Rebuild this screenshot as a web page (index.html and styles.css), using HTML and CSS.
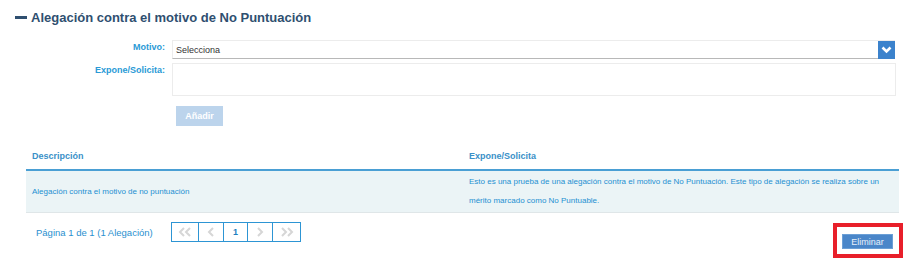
FILE: index.html
```html
<!DOCTYPE html>
<html lang="es">

<head>
    <meta charset="utf-8">
    <title>Alegaciones</title>
    <link rel="stylesheet" href="styles.css">
</head>

<body>
    <div class="panel">
        <h2 class="title"><span class="minus"></span>Alegación contra el motivo de No Puntuación</h2>

        <!-- Formulario de alta -->
        <div class="form">
            <div class="form-row">
                <label class="form-label">Motivo:</label>
                <div class="select">
                    <span class="select-text">Selecciona</span>
                    <span class="select-arrow">
                        <svg width="11" height="8" viewBox="0 0 11 8">
                            <path d="M1.5 1.5 L5.5 5.5 L9.5 1.5" fill="none" stroke="#fff" stroke-width="2.6"/>
                        </svg>
                    </span>
                </div>
            </div>
            <div class="form-row">
                <label class="form-label">Expone/Solicita:</label>
                <div class="textarea"></div>
            </div>
            <div class="form-row form-actions">
                <span class="form-label"></span>
                <button class="btn btn-disabled">Añadir</button>
            </div>
        </div>

        <!-- Listado -->
        <table class="list">
            <tr>
                <th class="col-desc">Descripción</th>
                <th>Expone/Solicita</th>
            </tr>
            <tr>
                <td>Alegación contra el motivo de no puntuación</td>
                <td>Esto es una prueba de una alegación contra el motivo de No Puntuación. Este tipo de alegación se realiza sobre un mérito marcado como No Puntuable.</td>
            </tr>
        </table>

        <div class="footer">
            <span class="page-info">Página 1 de 1 (1 Alegación)</span>
            <div class="pager">
                <span class="pager-cell">
                    <svg width="14" height="10" viewBox="0 0 14 10"><path d="M6 1 L2 5 L6 9 M12 1 L8 5 L12 9" fill="none" stroke="#d6d6d6" stroke-width="2"/></svg>
                </span>
                <span class="pager-cell">
                    <svg width="8" height="10" viewBox="0 0 8 10"><path d="M6 1 L2 5 L6 9" fill="none" stroke="#d6d6d6" stroke-width="2"/></svg>
                </span>
                <span class="pager-cell current">1</span>
                <span class="pager-cell">
                    <svg width="8" height="10" viewBox="0 0 8 10"><path d="M2 1 L6 5 L2 9" fill="none" stroke="#d6d6d6" stroke-width="2"/></svg>
                </span>
                <span class="pager-cell">
                    <svg width="14" height="10" viewBox="0 0 14 10"><path d="M2 1 L6 5 L2 9 M8 1 L12 5 L8 9" fill="none" stroke="#d6d6d6" stroke-width="2"/></svg>
                </span>
            </div>
            <div class="delete-wrap">
                <button class="btn btn-primary">Eliminar</button>
                <span class="highlight"></span>
            </div>
        </div>
    </div>
</body>

</html>
```

FILE: styles.css
```css
/* Base */
body {
    margin: 0;
    font-family: 'Liberation Sans', Arial, sans-serif;
    background-color: #ffffff;
}

.panel {
    padding: 8px 17px 20px 15px;
}

/* Title */
.title {
    display: flex;
    align-items: center;
    margin: 0;
    height: 18px;
    font-size: 13px;
    font-weight: 700;
    color: #2f4f70;
}

.minus {
    display: inline-block;
    width: 12px;
    height: 3px;
    background-color: #2f4f70;
    margin-right: 4px;
}

/* Form */
.form {
    margin-top: 14px;
}

.form-row {
    display: flex;
    align-items: flex-start;
    margin-bottom: 4px;
}

.form-label {
    width: 150px;
    flex-shrink: 0;
    margin-right: 7px;
    text-align: right;
    font-size: 9px;
    font-weight: 700;
    color: #2a9ad6;
    padding-top: 2px;
}

.select {
    display: flex;
    align-items: center;
    width: 721px;
    height: 17px;
    border: 1px solid #ececec;
    border-bottom-color: #b8b8b8;
}

.select-text {
    flex: 1;
    padding-left: 3px;
    font-size: 9px;
    color: #333333;
}

.select-arrow {
    display: flex;
    align-items: center;
    justify-content: center;
    width: 17px;
    height: 18px;
    margin-right: -1px;
    margin-top: 1px;
    background-color: #3b82cc;
}

.textarea {
    width: 723px;
    height: 31px;
    border: 1px solid #ececec;
}

.form-actions {
    margin-top: 10px;
}

.form-actions .form-label {
    margin-right: 11px;
}

/* Buttons */
.btn {
    border: none;
    font-family: inherit;
    font-size: 9px;
    font-weight: 700;
    color: #ffffff;
    padding: 0;
}

.btn-disabled {
    width: 47px;
    height: 20px;
    background-color: #bcd4ec;
}

.btn-primary {
    width: 51px;
    height: 15px;
    background-color: #4a86c9;
    border: 1px solid #6b9fd6;
    font-weight: 400;
    color: #e8f0fa;
}

/* Table */
.list {
    width: 873px;
    margin: 20px 0 0 11px;
    border-collapse: collapse;
}

.list th {
    text-align: left;
    font-size: 9px;
    font-weight: 700;
    color: #3a90c8;
    padding: 5px 6px 8px;
    border-bottom: 2px solid #4a9fd4;
}

.list th.col-desc {
    width: 425px;
}

.list td {
    background-color: #ebf4f6;
    font-size: 8px;
    line-height: 19px;
    color: #1e90d2;
    padding: 1px 6px 2px;
    vertical-align: middle;
    border-bottom: 1px solid #dfe6e8;
}

/* Footer */
.footer {
    display: flex;
    align-items: flex-start;
    padding: 9px 0 0 21px;
}

.page-info {
    font-size: 9.5px;
    color: #2a90cf;
    padding-top: 5px;
    width: 135px;
}

.pager {
    display: flex;
    border: 1px solid #2d95d4;
    height: 18px;
}

.pager-cell {
    display: flex;
    align-items: center;
    justify-content: center;
    width: 24px;
    border-left: 1px solid #2d95d4;
}

.pager-cell:first-child {
    border-left: none;
    width: 26px;
}

.pager-cell:last-child {
    width: 27px;
}

.pager-cell.current {
    font-size: 9px;
    font-weight: 700;
    color: #1e7fc0;
    width: 23px;
}

.delete-wrap {
    display: flex;
    position: relative;
    margin-left: auto;
    margin-top: 12px;
    margin-right: 3px;
}

/* Red annotation box */
.highlight {
    position: absolute;
    left: -9px;
    top: -11px;
    width: 62px;
    height: 27px;
    border: 4px solid #e81f2a;
}
```
